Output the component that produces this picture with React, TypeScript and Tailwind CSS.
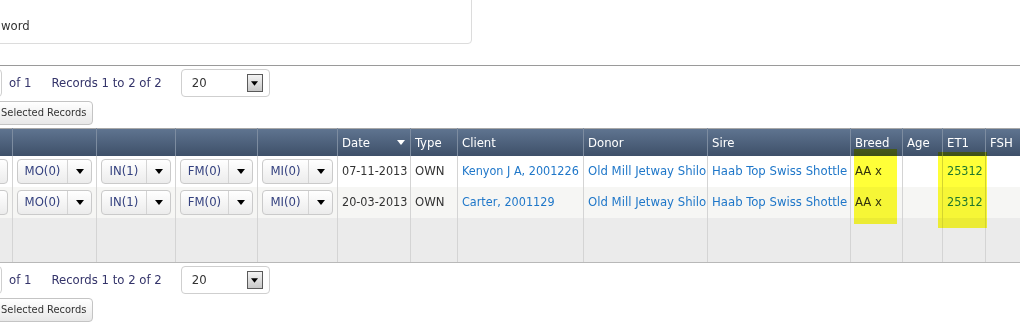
import React from 'react';

const font = { fontFamily: "'DejaVu Sans Condensed', 'DejaVu Sans', sans-serif" };

const rows = [
  { date: '07-11-2013', type: 'OWN', client: 'Kenyon J A, 2001226', donor: 'Old Mill Jetway Shilo', sire: 'Haab Top Swiss Shottle', breed: 'AA x', age: '', et1: '25312', fsh: '', bg: 'bg-white' },
  { date: '20-03-2013', type: 'OWN', client: 'Carter, 2001129', donor: 'Old Mill Jetway Shilo', sire: 'Haab Top Swiss Shottle', breed: 'AA x', age: '', et1: '25312', fsh: '', bg: 'bg-[#f6f6f4]' },
];

const actions = ['MO(0)', 'IN(1)', 'FM(0)', 'MI(0)'];

function Caret({ className = '' }: { className?: string }) {
  return (
    <svg width="8" height="5" viewBox="0 0 8 5" className={className}>
      <path d="M0 0h8L4 5z" fill="currentColor" />
    </svg>
  );
}

function SplitButton({ label }: { label: string }) {
  return (
    <div className="flex h-[25px] w-full rounded-[4px] border border-[#cacaca] bg-gradient-to-b from-white to-[#ececec] text-[#34417f]">
      <span className="flex flex-1 items-center justify-center">{label}</span>
      <span className="flex w-[24px] items-center justify-center border-l border-[#d4d4d4] text-black">
        <Caret />
      </span>
    </div>
  );
}

function Pager() {
  return (
    <div>
      <div className="flex h-[28px] items-center text-[13px] text-[#34346a]">
        <div className="-ml-[28px] h-[28px] w-[30px] rounded-[4px] border border-[#cfcfcf] bg-white" />
        <span className="ml-[7px]">of 1</span>
        <span className="ml-[20px]">Records 1 to 2 of 2</span>
        <div className="ml-[19px] flex h-[28px] w-[89px] items-center justify-between rounded-[4px] border border-[#cfcfcf] bg-white pl-[10px] pr-[6px]">
          <span className="text-[#333]">20</span>
          <span className="flex h-[18px] w-[16px] items-center justify-center border border-[#5a5a5a] bg-gradient-to-b from-[#f4f4f4] to-[#c8c8c8] text-black">
            <Caret className="w-[7px]" />
          </span>
        </div>
      </div>
      <div className="mt-[4px] flex">
        <button className="-ml-[12px] flex h-[24px] items-center rounded-[4px] border border-[#c4c4c4] bg-gradient-to-b from-white to-[#e8e8e8] pl-[12px] pr-[6px] text-[11px] text-[#333]">
          Selected Records
        </button>
      </div>
    </div>
  );
}

export default function App() {
  const widths = [84, 84, 79, 82, 80, 73, 47, 126, 124, 143, 52, 40, 43, 60];
  const headers = ['', '', '', '', '', 'Date', 'Type', 'Client', 'Donor', 'Sire', 'Breed', 'Age', 'ET1', 'FSH'];
  const cell = 'whitespace-nowrap overflow-hidden border-x border-[#d4d4d4] px-[4px]';

  return (
    <div className="h-[324px] w-[1020px] overflow-hidden bg-white" style={font}>
      {/* login panel, cut off at the top */}
      <div className="-ml-[40px] -mt-[12px] flex h-[56px] w-[512px] items-end rounded-[4px] border border-[#dcdcdc] bg-white pb-[8px] pl-[40px] text-[13px] text-[#333]">
        <span>word</span>
      </div>

      <div className="mt-[21px] h-px bg-[#9a9a9a]" />

      <div className="mt-[3px]">
        <Pager />
      </div>

      <div className="relative mt-[3px]">
        <table className="-ml-[72px] table-fixed border-collapse text-[13px]" style={{ width: 1117 }}>
          <colgroup>
            {widths.map((w, i) => (
              <col key={i} style={{ width: w }} />
            ))}
          </colgroup>
          <thead>
            <tr className="h-[27px] bg-gradient-to-b from-[#5f7490] to-[#3e5069] text-white">
              {headers.map((h, i) => (
                <th key={i} className="whitespace-nowrap border-x border-t border-[#7d8ca0] border-t-[#a8a8a8] px-[4px] text-left font-normal">
                  {h === 'Date' ? (
                    <div className="flex items-center justify-between pr-[1px]">
                      <span>Date</span>
                      <Caret />
                    </div>
                  ) : (
                    h
                  )}
                </th>
              ))}
            </tr>
          </thead>
          <tbody>
            {rows.map((r, ri) => (
              <tr key={ri} className={`h-[31px] ${r.bg}`}>
                <td className={cell}>
                  <SplitButton label="" />
                </td>
                {actions.map((a) => (
                  <td key={a} className={cell}>
                    <SplitButton label={a} />
                  </td>
                ))}
                <td className={`${cell} text-[12.5px] text-[#333]`}>{r.date}</td>
                <td className={`${cell} text-[#333]`}>{r.type}</td>
                <td className={`${cell} text-[12.5px] text-[#1f77c9]`}>{r.client}</td>
                <td className={`${cell} text-[#1f77c9]`}>{r.donor}</td>
                <td className={`${cell} text-[#1f77c9]`}>{r.sire}</td>
                <td className={`${cell} text-[#333]`}>{r.breed}</td>
                <td className={cell}>{r.age}</td>
                <td className={`${cell} text-[12.5px] text-[#1f77c9]`}>{r.et1}</td>
                <td className={cell}>{r.fsh}</td>
              </tr>
            ))}
            <tr className="h-[45px] bg-[#ebebeb]">
              {widths.map((_, i) => (
                <td key={i} className="border-x border-b border-[#d4d4d4] border-b-[#b8b8b8]" />
              ))}
            </tr>
          </tbody>
        </table>

        {/* highlighter marks */}
        <div className="pointer-events-none absolute left-[854px] top-[21px] h-[75px] w-[43px] bg-[#ffff38] mix-blend-multiply" />
        <div className="pointer-events-none absolute left-[938px] top-[24px] h-[76px] w-[49px] bg-[#ffff38] mix-blend-multiply" />
      </div>

      <div className="mt-[3px]">
        <Pager />
      </div>
    </div>
  );
}
